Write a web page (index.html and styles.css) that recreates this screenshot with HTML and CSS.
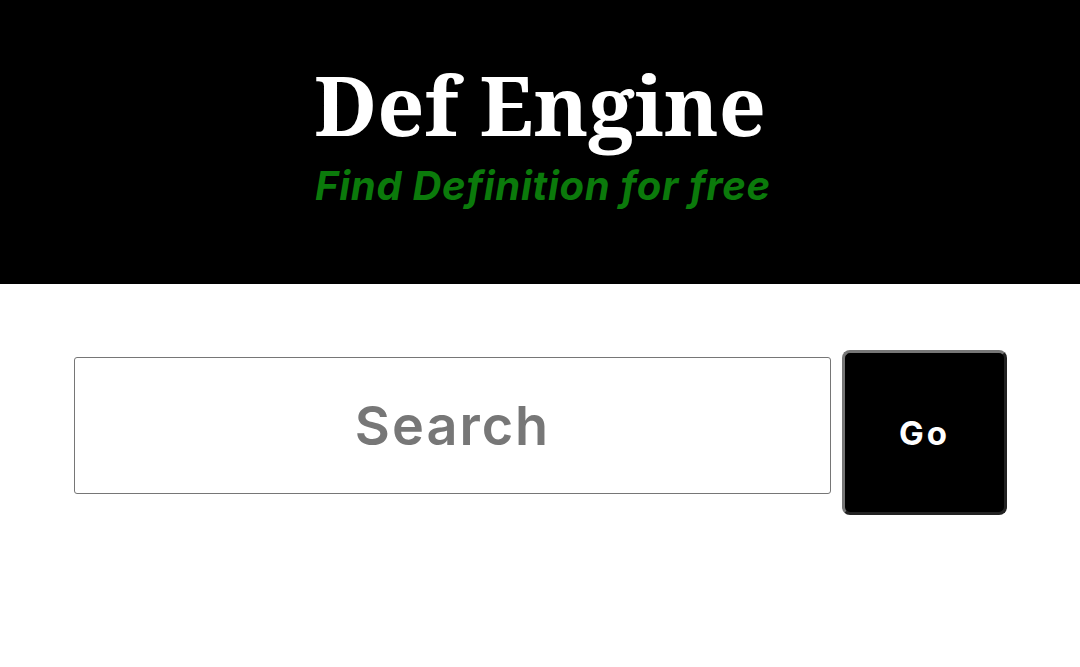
FILE: index.html
```html
<!DOCTYPE html>
<html>
<head>
<meta charset="utf-8">
<link rel="stylesheet" href="styles.css">
</head>
<body>
<header class="hero">
  <h1 class="title">Def Engine</h1>
  <p class="tagline">Find Definition for free</p>
</header>
<main class="search">
  <input class="search-input" type="text" placeholder="Search">
  <button class="go-btn">Go</button>
</main>
</body>
</html>
```
FILE: styles.css
```css
html, body {
  margin: 0;
  padding: 0;
  background: #fff;
}
.hero {
  background: #000;
  height: 284px;
  display: flex;
  flex-direction: column;
  align-items: center;
  padding-top: 54px;
  box-sizing: border-box;
}
.title {
  margin: 0;
  font-family: "Noto Serif", "DejaVu Serif", serif;
  font-weight: 700;
  font-size: 82.5px;
  line-height: 100px;
  color: #fff;
}
.tagline {
  margin: 7px 0 0;
  padding-left: 6px;
  font-family: "Inter", "Liberation Sans", sans-serif;
  font-style: italic;
  font-weight: 700;
  font-size: 40px;
  line-height: 50px;
  letter-spacing: 0.7px;
  color: #0b7a0b;
}
.search {
  display: flex;
  align-items: baseline;
  gap: 11px;
  padding: 66px 73px 0 74px;
}
.search-input {
  width: 757px;
  height: 137px;
  box-sizing: border-box;
  border: 1px solid #767676;
  border-radius: 3px;
  font-family: "Inter", "Liberation Sans", sans-serif;
  font-weight: 600;
  font-size: 54px;
  letter-spacing: 2px;
  text-align: center;
  color: #333;
  outline: none;
}
.search-input::placeholder {
  color: #777;
}
.go-btn {
  width: 165px;
  height: 165px;
  box-sizing: border-box;
  background: #000;
  color: #fff;
  border: 3px solid;
  border-color: #767676 #222 #222 #767676;
  border-radius: 8px;
  font-family: "Inter", "Liberation Sans", sans-serif;
  font-weight: 700;
  font-size: 33px;
  letter-spacing: 3px;
  padding-left: 6px;
}
```
